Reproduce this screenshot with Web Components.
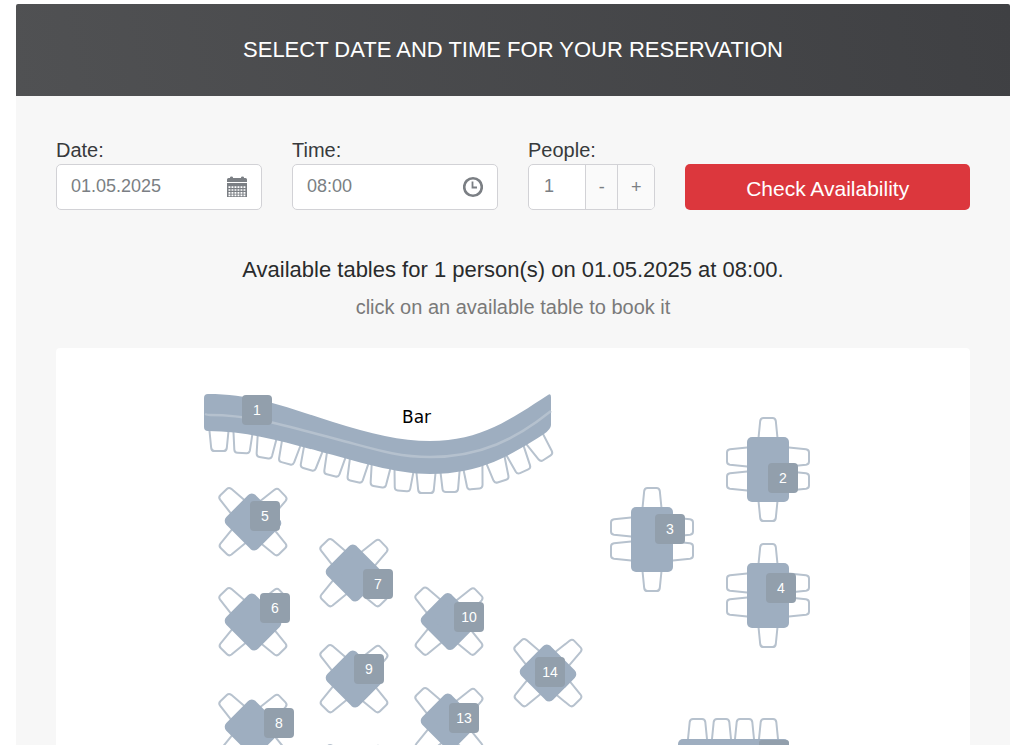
<!DOCTYPE html>
<html lang="en">
<head>
<meta charset="utf-8">
<title>Table reservation</title>
<style>
  body {
    margin: 0;
    background: #fff;
    font-family: Arial, "Liberation Sans", sans-serif;
    color: #373a3c;
  }
</style>
</head>
<body>
<reservation-page>
  <span slot="title">SELECT DATE AND TIME FOR YOUR RESERVATION</span>
  <text-field slot="form" class="date" label="Date:" value="01.05.2025">
    <svg slot="icon" width="20" height="22" viewBox="0 0 20 22">
      <path fill="#7b7f84" d="M0 6V3.500Q0 2 1.500 2H3V1.500Q3 .5 4.500 .5T6 1.500V2H14V1.500Q14 .5 15.500 .5T17 1.500V2H18.500Q20 2 20 3.500V6ZM0 7H20V21H0Z"/>
      <path fill="none" stroke="#fff" stroke-width="1.700" stroke-dasharray="1.900 1.100" d="M1.500 11.200H18.600M1.500 14H18.600M1.500 16.800H18.600M1.500 19.300H18.600"/>
    </svg>
  </text-field>
  <text-field slot="form" class="time" label="Time:" value="08:00">
    <svg slot="icon" width="20" height="22" viewBox="0 0 20 22" fill="none" stroke="#7b7f84">
      <circle cx="10" cy="11" r="8.800" stroke-width="2.600"/>
      <path d="M9.500 5.500V11.500H14" stroke-width="1.800"/>
    </svg>
  </text-field>
  <people-field slot="form" class="people" label="People:" value="1"></people-field>
  <submit-button slot="form" class="submit">Check Availability</submit-button>
  <span slot="message">Available tables for 1 person(s) on 01.05.2025 at 08:00.</span>
  <span slot="hint">click on an available table to book it</span>
  <seat-map slot="map"></seat-map>
</reservation-page>

<script>
class ReservationPage extends HTMLElement {
  constructor() {
    super();
    this.attachShadow({ mode: "open" });
    this.shadowRoot.innerHTML = this.htmlTemplate;
  }

  get htmlTemplate() {
    return `
      <style>
        :host {
          display: flex;
          flex-direction: column;
          box-sizing: border-box;
          height: 100vh;
          padding: 4px 11px 0 16px;
        }

        header {
          flex: none;
          padding: 33px 40px;
          text-align: center;
          color: #fff;
          background: linear-gradient(80deg, #505153, #3f4043);
          border-radius: 2px 2px 0 0;
        }

        h1 {
          margin: 0;
          font-size: 22px;
          line-height: 26px;
          font-weight: normal;
        }

        main {
          flex: 1;
          min-height: 0;
          display: flex;
          flex-direction: column;
          padding: 40px 40px 0;
          background: #f7f7f7;
        }

        form {
          flex: none;
          display: grid;
          grid-template-columns: repeat(12, 1fr);
          column-gap: 30px;
          align-items: end;
        }

        ::slotted(.date),
        ::slotted(.time) {
          grid-column: span 3;
        }

        ::slotted(.people) {
          grid-column: span 2;
        }

        ::slotted(.submit) {
          grid-column: span 4;
        }

        h2,
        p {
          flex: none;
          margin: 0;
          text-align: center;
          font-weight: normal;
        }

        h2 {
          margin-top: 46px;
          font-size: 22px;
          line-height: 28px;
          color: #292b2c;
        }

        p {
          margin: 9px 0 27px;
          font-size: 20px;
          line-height: 28px;
          color: #7a7a7a;
        }

        ::slotted(seat-map) {
          flex: 1;
          min-height: 0;
        }
      </style>

      <header><h1><slot name="title"></slot></h1></header>
      <main>
        <form><slot name="form"></slot></form>
        <h2><slot name="message"></slot></h2>
        <p><slot name="hint"></slot></p>
        <slot name="map"></slot>
      </main>
    `;
  }
}

class TextField extends HTMLElement {
  constructor() {
    super();
    this.attachShadow({ mode: "open" });
    this.shadowRoot.innerHTML = this.htmlTemplate;
  }

  get htmlTemplate() {
    return `
      <style>
        :host {
          display: block;
        }

        label {
          display: block;
          font-size: 20px;
          line-height: 28px;
        }

        .box {
          display: flex;
          align-items: center;
          box-sizing: border-box;
          height: 46px;
          padding: 0 14px;
          background: #fff;
          border: 1px solid #d2d2d6;
          border-radius: 5px;
        }

        input {
          flex: 1;
          min-width: 0;
          height: 42px;
          padding: 0 0 2px;
          border: 0;
          outline: 0;
          background: none;
          font: inherit;
          font-size: 18px;
          color: #7b7f84;
        }
      </style>

      <label for="field">${this.getAttribute("label")}</label>
      <div class="box">
        <input id="field" type="text" value="${this.getAttribute("value")}">
        <slot name="icon"></slot>
      </div>
    `;
  }
}

class PeopleField extends HTMLElement {
  constructor() {
    super();
    this.attachShadow({ mode: "open" });
    this.shadowRoot.innerHTML = this.htmlTemplate;
    const [minus, plus] = this.shadowRoot.querySelectorAll("button");
    minus.addEventListener("click", () => this.change(-1));
    plus.addEventListener("click", () => this.change(1));
  }

  get htmlTemplate() {
    return `
      <style>
        :host {
          display: block;
        }

        label {
          display: block;
          font-size: 20px;
          line-height: 28px;
        }

        .box {
          display: flex;
          box-sizing: border-box;
          height: 46px;
          overflow: hidden;
          background: #fff;
          border: 1px solid #d2d2d6;
          border-radius: 5px;
        }

        input,
        button {
          font: inherit;
          font-size: 18px;
          color: #7b7f84;
          border: 0;
          outline: 0;
        }

        input {
          flex: 1;
          min-width: 0;
          padding: 0 0 2px 15px;
          background: none;
        }

        button {
          width: 32px;
          padding: 1px 0 0;
          background: #fafafa;
          border-left: 1px solid #d2d2d6;
        }

        button:last-child {
          width: 37px;
        }
      </style>

      <label for="field">${this.getAttribute("label")}</label>
      <div class="box">
        <input id="field" type="text" value="${this.getAttribute("value")}">
        <button type="button">-</button>
        <button type="button">+</button>
      </div>
    `;
  }

  /**
   * Add to the number of people, never below one
   */
  change(step) {
    const input = this.shadowRoot.querySelector("input");
    input.value = Math.max(1, Number(input.value) + step);
  }
}

class SubmitButton extends HTMLElement {
  constructor() {
    super();
    this.attachShadow({ mode: "open" });
    this.shadowRoot.innerHTML = `
      <style>
        :host {
          display: block;
        }

        button {
          display: block;
          width: 100%;
          height: 46px;
          padding: 4px 0 0;
          border: 0;
          border-radius: 5px;
          background: #dc373d;
          color: #fff;
          font: inherit;
          font-size: 21px;
          cursor: pointer;
        }
      </style>

      <button type="button"><slot></slot></button>
    `;
  }
}

// Numbered table marker; its place on the plan is set by the map
class TableBadge extends HTMLElement {
  constructor() {
    super();
    this.attachShadow({ mode: "open" });
    this.shadowRoot.innerHTML = `
      <style>
        :host {
          display: block;
        }

        button {
          display: block;
          width: 30px;
          height: 30px;
          padding: 0;
          border: 0;
          border-radius: 4px;
          background: #929fac;
          color: #fff;
          font: inherit;
          font-size: 14px;
          cursor: pointer;
        }
      </style>

      <button type="button"><slot></slot></button>
    `;
  }
}

// x, y, rotation of the stools along the bar
const STOOLS = [
  [163, 83, 0], [187, 85, 3], [211, 90, 9], [235, 96, 15], [257, 102, 16],
  [280, 108, 14], [303, 114, 13], [325, 119, 9], [348, 123, 5], [370, 125, 0],
  [394, 124, -1], [417, 121, -6], [440, 114, -17], [460, 105, -24], [480, 93, -33]
];

// centres of the square tables
const SQUARES = [
  [197, 174], [298, 225], [197, 274], [298, 331], [197, 380],
  [393, 273.5], [393, 374], [492, 325], [298, 431]
];

// centres of the upright six seat tables
const UPRIGHTS = [[712, 121.5], [596, 191.5], [712, 247.5]];

const BADGES = [
  [1, 186, 47], [2, 712, 115], [3, 599, 166], [4, 710, 225],
  [5, 194, 153], [6, 204, 245], [7, 307, 221], [8, 208, 360],
  [9, 298, 306], [10, 398, 254], [13, 393, 355], [14, 479, 309]
];

class SeatMap extends HTMLElement {
  constructor() {
    super();
    this.attachShadow({ mode: "open" });
    this.shadowRoot.innerHTML = this.htmlTemplate;
  }

  chair(x, y, angle) {
    return `<path class="chair" transform="translate(${x} ${y}) rotate(${angle})"
      d="M-10 -5L-7.800 17Q-7.400 20 -4.500 20H4.500Q7.400 20 7.800 17L10 -5"/>`;
  }

  square([x, y]) {
    return `
      <g transform="translate(${x} ${y})">
        ${this.chair(15, 15, -45)}
        ${this.chair(-15, 15, 45)}
        ${this.chair(-15.5, -15.5, 136)}
        ${this.chair(15, -15, -134)}
        <path class="top" stroke-width="11" d="M-1.200 -23L22.800 1.200L1.200 23L-22.800 -1.200Z"/>
      </g>`;
  }

  upright([x, y]) {
    return `
      <g transform="translate(${x} ${y})">
        ${this.chair(0, -31.500, 180)}
        ${this.chair(0, 31.500, 0)}
        ${this.chair(-21, -12.500, 90)}
        ${this.chair(-21, 11.500, 90)}
        ${this.chair(21, -12.500, -90)}
        ${this.chair(21, 11.500, -90)}
        <rect class="top" x="-21" y="-32.500" width="42" height="65" rx="5"/>
      </g>`;
  }

  get htmlTemplate() {
    return `
      <style>
        :host {
          display: block;
          overflow: auto;
          scrollbar-width: none;
          background: #fff;
          border-radius: 4px 4px 0 0;
        }

        .plan {
          position: relative;
          width: 914px;
          margin: 0 auto;
        }

        svg {
          display: block;
        }

        .chair {
          fill: #fff;
          stroke: #b7c2ce;
          stroke-width: 2;
        }

        .top {
          fill: #9eaec0;
          stroke: #9eaec0;
          stroke-linejoin: round;
        }

        rect.top {
          stroke: none;
        }

        text {
          font: 17px "DejaVu Sans", sans-serif;
          fill: #000;
        }

        table-badge {
          position: absolute;
        }
      </style>

      <div class="plan">
        <svg width="914" height="480" viewBox="0 0 914 480">
          ${STOOLS.map((s) => this.chair(...s)).join("")}
          <path fill="#9eaec0" d="M152 46C200 46 235 61 277 74C315 86 345 93 374 93C425 93 455 71 492 47Q495 45 495 49V77Q495 81 488 86C455 107 425 126 374 126C340 126 300 113 262 103C225 93 190 83 152 83Q148 83 148 79V50Q148 46 152 46Z"/>
          <path fill="none" stroke="#b5c1ce" stroke-width="2.500" d="M149 66Q151 67 154 67C200 67 240 81 280 91C315 100 340 109 374 109C425 109 460 91 495 63"/>
          <text x="346" y="75">Bar</text>
          ${SQUARES.map((s) => this.square(s)).join("")}
          ${UPRIGHTS.map((u) => this.upright(u)).join("")}
          ${[641.5, 665.5, 688.5, 712.5].map((x) => this.chair(x, 391, 180)).join("")}
          <rect class="top" x="622" y="391" width="111" height="42" rx="5"/>
          <rect fill="#929fac" x="703" y="392" width="30" height="30" rx="3"/>
        </svg>
        ${BADGES.map(([n, x, y]) => `<table-badge style="left:${x}px;top:${y}px">${n}</table-badge>`).join("")}
      </div>
    `;
  }
}

customElements.define("text-field", TextField);
customElements.define("people-field", PeopleField);
customElements.define("submit-button", SubmitButton);
customElements.define("table-badge", TableBadge);
customElements.define("seat-map", SeatMap);
customElements.define("reservation-page", ReservationPage);
</script>
</body>
</html>
